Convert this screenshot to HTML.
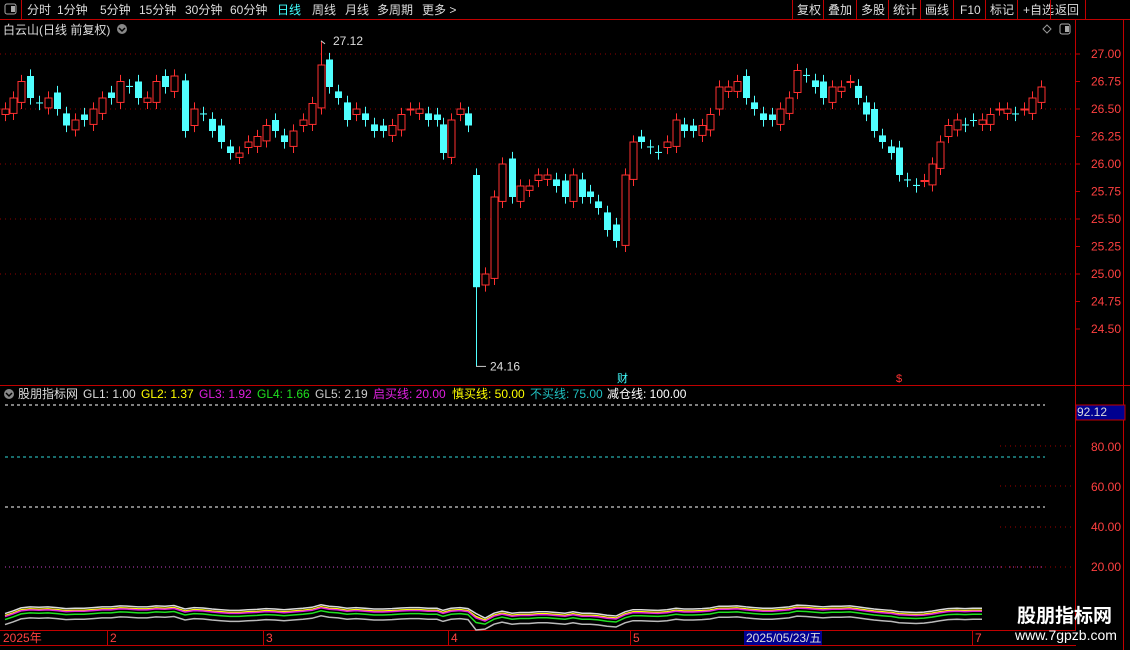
<!DOCTYPE html>
<html><head><meta charset="utf-8"><style>
body{margin:0;background:#000;width:1130px;height:650px;overflow:hidden;font-family:"Liberation Sans","Noto Sans CJK SC",sans-serif;}
svg{position:absolute;left:0;top:0}
</style></head><body>
<svg id="s" width="1130" height="650" xmlns="http://www.w3.org/2000/svg" font-family="Liberation Sans, Noto Sans CJK SC, sans-serif">
<rect width="1130" height="650" fill="#000"/>
<line x1="0" y1="19.5" x2="1130" y2="19.5" stroke="#c00000"/>
<line x1="21.5" y1="0" x2="21.5" y2="19" stroke="#c00000"/>
<rect x="5" y="4" width="11" height="10" fill="none" stroke="#aaa" rx="2"/><rect x="11" y="6" width="4" height="6" fill="#aaa"/>
<g font-size="12" fill="#ddd">
<text x="27" y="14">分时</text><text x="57" y="14">1分钟</text><text x="100" y="14">5分钟</text><text x="139" y="14">15分钟</text><text x="185" y="14">30分钟</text><text x="230" y="14">60分钟</text>
<text x="277" y="14" fill="#40ffff">日线</text><text x="312" y="14">周线</text><text x="345" y="14">月线</text><text x="377" y="14">多周期</text><text x="422" y="14">更多 &gt;</text>
<text x="797" y="14">复权</text><text x="828" y="14">叠加</text><text x="861" y="14">多股</text><text x="893" y="14">统计</text><text x="925" y="14">画线</text><text x="960" y="14">F10</text><text x="990" y="14">标记</text><text x="1023" y="14">+自选</text><text x="1055" y="14">返回</text>
</g>
<g stroke="#c00000"><line x1="792.5" y1="0" x2="792.5" y2="19"/><line x1="823.5" y1="0" x2="823.5" y2="19"/><line x1="856.5" y1="0" x2="856.5" y2="19"/><line x1="888.5" y1="0" x2="888.5" y2="19"/><line x1="920.5" y1="0" x2="920.5" y2="19"/><line x1="953.5" y1="0" x2="953.5" y2="19"/><line x1="985.5" y1="0" x2="985.5" y2="19"/><line x1="1017.5" y1="0" x2="1017.5" y2="19"/><line x1="1050.5" y1="0" x2="1050.5" y2="19"/><line x1="1085.5" y1="0" x2="1085.5" y2="19"/></g>
<text x="3" y="34" font-size="12" fill="#ddd">白云山(日线 前复权)</text>
<circle cx="122" cy="29" r="5" fill="#888"/><path d="M119 28l3 3 3-3" stroke="#000" stroke-width="1.5" fill="none"/>
<path d="M1047 25l4 4-4 4-4-4z" fill="none" stroke="#999"/>
<rect x="1060" y="24" width="10" height="10" fill="none" stroke="#aaa" rx="2"/><rect x="1065" y="26" width="4" height="6" fill="#aaa"/>
<line x1="1075.5" y1="20" x2="1075.5" y2="630" stroke="#c00000"/>
<line x1="1123.5" y1="20" x2="1123.5" y2="650" stroke="#c00000"/>
<line x1="0" y1="385.5" x2="1130" y2="385.5" stroke="#c00000"/>
<line x1="0" y1="630.5" x2="1076" y2="630.5" stroke="#c00000"/>
<line x1="0" y1="645.5" x2="1076" y2="645.5" stroke="#c00000"/>
<g id="main"></g>
<circle cx="9" cy="394" r="5" fill="#888"/><path d="M6 393l3 3 3-3" stroke="#000" stroke-width="1.5" fill="none"/>
<g font-size="12">
<text x="18" y="398" fill="#ddd">股朋指标网</text>
<text x="83" y="398" fill="#ddd">GL1: 1.00</text>
<text x="141" y="398" fill="#ffff00">GL2: 1.37</text>
<text x="199" y="398" fill="#e020e0">GL3: 1.92</text>
<text x="257" y="398" fill="#20e020">GL4: 1.66</text>
<text x="315" y="398" fill="#ccc">GL5: 2.19</text>
<text x="373" y="398" fill="#e020e0">启买线: 20.00</text>
<text x="452" y="398" fill="#ffff00">慎买线: 50.00</text>
<text x="530" y="398" fill="#20c0c0">不买线: 75.00</text>
<text x="607" y="398" fill="#fff">减仓线: 100.00</text>
</g>
<line x1="5" y1="405" x2="1045" y2="405" stroke="#fff" stroke-dasharray="3,3"/>
<line x1="5" y1="457" x2="1045" y2="457" stroke="#30d8d8" stroke-dasharray="3,3"/>
<line x1="5" y1="507" x2="1045" y2="507" stroke="#fff" stroke-dasharray="3,3"/>
<line x1="5" y1="567" x2="1045" y2="567" stroke="#c040c0" stroke-dasharray="1,3"/>
<g stroke="#a00000" stroke-dasharray="1,4"><line x1="1000" y1="446" x2="1075" y2="446"/><line x1="1000" y1="486" x2="1075" y2="486"/><line x1="1000" y1="527" x2="1075" y2="527"/><line x1="1000" y1="567" x2="1075" y2="567"/></g>
<g font-size="12" fill="#ff4040"><text x="1091" y="451">80.00</text><text x="1091" y="491">60.00</text><text x="1091" y="531">40.00</text><text x="1091" y="571">20.00</text></g>
<rect x="1076" y="405" width="49" height="15" fill="#000090" stroke="#c00000"/>
<text x="1077" y="416" font-size="12" fill="#ddd">92.12</text>
<g id="ind"></g>
<g font-size="12" fill="#ff4040"><text x="3" y="642">2025年</text><text x="110" y="642">2</text><text x="266" y="642">3</text><text x="451" y="642">4</text><text x="633" y="642">5</text><text x="975" y="642">7</text></g>
<rect x="744" y="631" width="78" height="14" fill="#000090"/>
<text x="746" y="642" font-size="12" fill="#ddd">2025/05/23/五</text>
<g stroke="#c00000"><line x1="107.5" y1="630" x2="107.5" y2="645"/><line x1="263.5" y1="630" x2="263.5" y2="645"/><line x1="448.5" y1="630" x2="448.5" y2="645"/><line x1="630.5" y1="630" x2="630.5" y2="645"/><line x1="972.5" y1="630" x2="972.5" y2="645"/></g>
<text x="1017" y="622" font-size="19" font-weight="bold" fill="#fff">股朋指标网</text>
<text x="1015" y="640" font-size="14" fill="#fff">www.7gpzb.com</text>
<text x="617" y="382" font-size="11" fill="#4ff">财</text>
<text x="896" y="382" font-size="11" fill="#f33">$</text>
</svg>
<script>
var D=[[5,26.5],[13,26.6],[21,26.75],[30,26.6],[39,26.55],[48,26.6],[57,26.5],[66,26.35],[75,26.4],[84,26.4],[93,26.5],[102,26.6],[111,26.6],[120,26.75],[129,26.7],[138,26.6],[147,26.6],[156,26.75],[165,26.7],[174,26.8],[185,26.3],[194,26.5],[203,26.45],[212,26.3],[221,26.2],[230,26.1],[239,26.1],[248,26.2],[257,26.25],[266,26.35],[275,26.3],[284,26.2],[293,26.3],[303,26.4],[312,26.55],[321,26.9],[329,26.7],[338,26.6],[347,26.4],[356,26.5],[365,26.4],[374,26.3],[383,26.3],[392,26.35],[401,26.45],[410,26.5],[419,26.5],[428,26.4],[437,26.4],[443,26.1],[451,26.4],[460,26.5],[468,26.35],[476,24.88],[485,25.0],[494,25.7],[502,26.0],[512,25.7],[520,25.8],[529,25.8],[538,25.9],[547,25.9],[556,25.8],[565,25.7],[573,25.9],[582,25.7],[590,25.7],[598,25.6],[607,25.4],[616,25.3],[625,25.9],[633,26.2],[641,26.2],[650,26.15],[658,26.1],[667,26.2],[676,26.4],[684,26.3],[693,26.3],[702,26.35],[710,26.45],[719,26.7],[728,26.7],[737,26.75],[746,26.6],[754,26.5],[763,26.4],[772,26.4],[780,26.5],[789,26.6],[797,26.85],[806,26.8],[815,26.7],[823,26.6],[832,26.7],[841,26.7],[850,26.75],[858,26.6],[866,26.45],[874,26.3],[882,26.2],[891,26.1],[899,25.9],[907,25.85],[916,25.8],[924,25.85],[932,26.0],[940,26.2],[948,26.35],[957,26.4],[965,26.35],[973,26.4],[982,26.4],[990,26.45],[999,26.5],[1007,26.5],[1015,26.45],[1024,26.5],[1032,26.6],[1041,26.7]];
function y(p){return 54+(27-p)*110;}
var g=document.getElementById('main'),h='';
for(var k=0;k<5;k++){var yy=y(27-k*0.5);h+='<line x1="0" y1="'+yy+'" x2="1075" y2="'+yy+'" stroke="#900000" stroke-dasharray="1,4"/>';}
[27,26.75,26.5,26.25,26,25.75,25.5,25.25,25,24.75,24.5].forEach(function(p){h+='<text x="1091" y="'+(y(p)+4)+'" font-size="12" fill="#ff4040">'+p.toFixed(2)+'</text><line x1="1075" y1="'+y(p)+'" x2="1080" y2="'+y(p)+'" stroke="#c00000"/>';});
var n=D.length,pr=26.4,iDrop=53,iHigh=35;
for(var i=0;i<n;i++){var x=D[i][0],c=D[i][1],o=pr+(i%3==0?0.05:-0.04);
 if(i==iDrop)o=25.9; if(i==iDrop+1)o=24.9;
 var up=c>=o,hi=Math.max(o,c)+0.06,lo=Math.min(o,c)-0.06;
 if(i==iHigh)hi=27.12; if(i==iDrop)lo=24.16;
 var col=up?'#ff3030':'#50ffff',t=y(Math.max(o,c)),b=y(Math.min(o,c));if(b-t<1)b=t+1;
 h+='<line x1="'+(x+.5)+'" y1="'+y(hi)+'" x2="'+(x+.5)+'" y2="'+y(lo)+'" stroke="'+col+'"/>';
 if(up)h+='<rect x="'+(x-3)+'" y="'+t+'" width="7" height="'+(b-t)+'" fill="#000" stroke="'+col+'"/>';
 else h+='<rect x="'+(x-3)+'" y="'+t+'" width="7" height="'+(b-t)+'" fill="'+col+'"/>';
 pr=c;}
var hx=D[iHigh][0],dx=D[iDrop][0];
h+='<path d="M'+hx+' '+y(27.12)+'l4 3" stroke="#ccc" fill="none"/><text x="'+(hx+12)+'" y="'+(y(27.12)+4)+'" font-size="12" fill="#ddd">27.12</text>';
h+='<path d="M'+dx+' '+y(24.16)+'h10" stroke="#ccc"/><text x="'+(dx+14)+'" y="'+(y(24.16)+4)+'" font-size="12" fill="#ddd">24.16</text>';
g.innerHTML=h;
var cols=['#ddd','#ffff00','#e020e0','#20e020','#bbb'],off=[-3,-1,0,3,8],ih='';
for(var L=0;L<5;L++){var d='',first=true;for(var i=0;i<n;i++){var x=D[i][0];if(x>985)break;var v=612-(D[i][1]-26.3)*7+off[L]+(i<3?(3-i)*2:0);if(i==iDrop)v=618+off[L]*1.5;d+=(first?'M':'L')+x+' '+v.toFixed(1);first=false;}
ih+='<path d="'+d+'" stroke="'+cols[L]+'" fill="none" stroke-width="1.5"/>';}
document.getElementById('ind').innerHTML=ih;
</script>
</body></html>
